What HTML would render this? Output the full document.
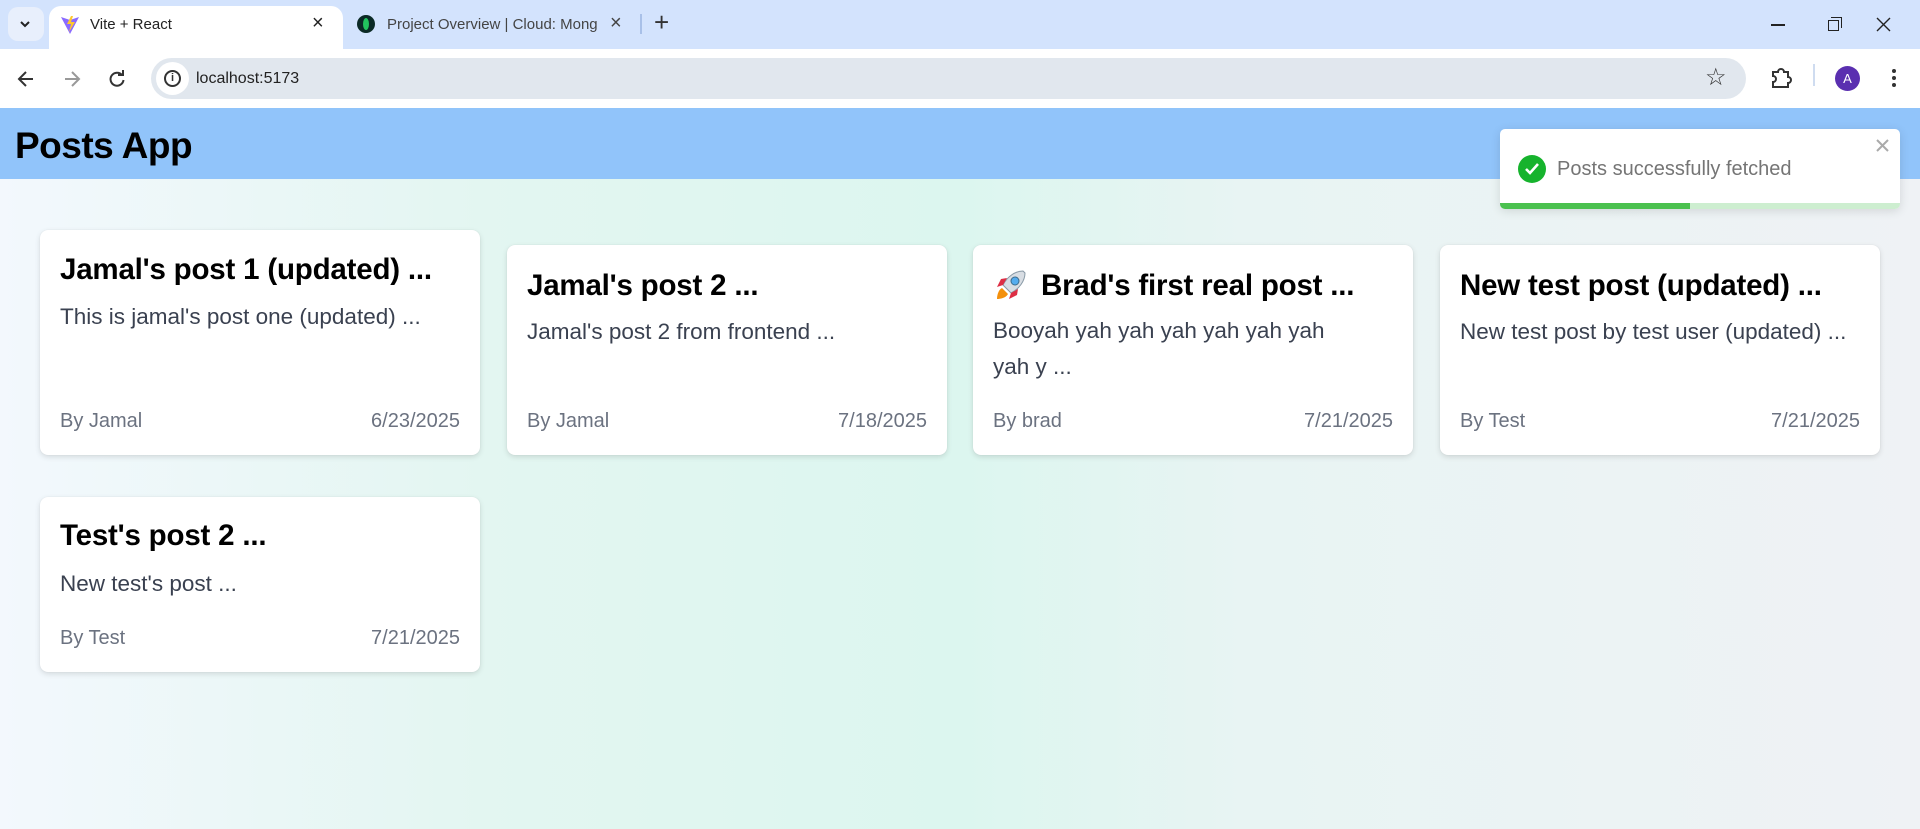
<!DOCTYPE html>
<html><head><meta charset="utf-8"><style>
*{margin:0;padding:0;box-sizing:border-box}
body{width:1920px;height:829px;overflow:hidden;font-family:"Liberation Sans",sans-serif;position:relative;background:#fff}
.abs{position:absolute}
#tabs{left:0;top:0;width:1920px;height:49px;background:#d3e3fd}
#tool{left:0;top:49px;width:1920px;height:59px;background:#fff}
#page{left:0;top:108px;width:1920px;height:721px;background:linear-gradient(90deg,#f3f8fd 0%,#e3f6f1 25%,#dcf6ef 50%,#e8f4f3 65%,#eff2f5 100%)}
#hdr{left:0;top:108px;width:1920px;height:71px;background:#91c4fa}
.card{position:absolute;background:#fff;border-radius:8px;box-shadow:0 2px 6px rgba(0,0,0,.12),0 0 1px rgba(0,0,0,.1)}
.t{position:absolute;left:20px;font-size:29.5px;line-height:1;font-weight:bold;color:#000;letter-spacing:-0.2px;white-space:nowrap}
.b{position:absolute;left:20px;font-size:22.5px;line-height:1;color:#3a4150;letter-spacing:0}
.f{position:absolute;left:20px;right:20px;font-size:20px;line-height:1;color:#6b7280;display:flex;justify-content:space-between}
</style></head><body>
<div id="page" class="abs"></div>
<div id="tabs" class="abs">
 <div class="abs" style="left:8px;top:7px;width:36px;height:34px;background:#e8effc;border-radius:10px"></div>
 <svg class="abs" style="left:19px;top:19px" width="12" height="10"><path d="M2 3l4 4 4-4" stroke="#222" stroke-width="2" fill="none"/></svg>
 <div class="abs" style="left:49px;top:6px;width:294px;height:44px;background:#fff;border-radius:12px 12px 0 0"></div>
 <svg class="abs" style="left:60px;top:15px" width="20" height="20"><path d="M1 2L10 19L19 2L10 5Z" fill="#8a6bff"/><path d="M11 1L7 9h4l-2 8 6-10h-4l2-6z" fill="#ffc82e"/></svg>
 <div class="abs" style="left:90px;top:16px;font-size:15px;color:#222">Vite + React</div>
 <div class="abs" style="left:312px;top:12px;font-size:20px;color:#222">×</div>
 <div class="abs" style="left:357px;top:15px;width:18px;height:18px;border-radius:50%;background:#0b2a26"></div>
 <div class="abs" style="left:363px;top:18px;width:6px;height:12px;border-radius:50%;background:#22c55e"></div>
 <div class="abs" style="left:387px;top:16px;font-size:15px;color:#444;width:210px;overflow:hidden;white-space:nowrap">Project Overview | Cloud: Mong</div>
 <div class="abs" style="left:610px;top:12px;font-size:20px;color:#444">×</div>
 <div class="abs" style="left:640px;top:14px;width:2px;height:20px;background:#a8c0e8"></div>
 <div class="abs" style="left:654px;top:7px;font-size:26px;color:#333">+</div>
 <div class="abs" style="left:1771px;top:24px;width:14px;height:1.5px;background:#222"></div>
 <div class="abs" style="left:1828px;top:20px;width:11px;height:11px;border:1.5px solid #222"></div>
 <div class="abs" style="left:1831px;top:17px;width:11px;height:11px;border-top:1.5px solid #222;border-right:1.5px solid #222"></div>
 <svg class="abs" style="left:1876px;top:17px" width="15" height="15"><path d="M1 1L14 14M14 1L1 14" stroke="#222" stroke-width="1.4"/></svg>
</div>
<div id="tool" class="abs">
 <svg class="abs" style="left:16px;top:20px" width="20" height="20"><path d="M17 10H4M10 3L3 10l7 7" stroke="#333" stroke-width="2" fill="none"/></svg>
 <svg class="abs" style="left:62px;top:20px" width="20" height="20"><path d="M3 10h13M10 3l7 7-7 7" stroke="#999" stroke-width="2" fill="none"/></svg>
 <svg class="abs" style="left:107px;top:20px" width="20" height="20"><path d="M15 6A6.5 6.5 0 1 0 16.5 11" stroke="#333" stroke-width="2" fill="none"/><path d="M11 6h5V1" stroke="#333" stroke-width="2" fill="none"/></svg>
 <div class="abs" style="left:151px;top:9px;width:1595px;height:41px;background:#e1e7ee;border-radius:21px"></div>
 <div class="abs" style="left:156px;top:13px;width:33px;height:33px;background:#fff;border-radius:50%"></div>
 <div class="abs" style="left:164px;top:21px;width:17px;height:17px;border:2px solid #333;border-radius:50%;font-size:11px;font-weight:bold;text-align:center;line-height:13px;color:#333">i</div>
 <div class="abs" style="left:196px;top:21px;font-size:16px;color:#222">localhost:5173</div>
 <div class="abs" style="left:1705px;top:14px;font-size:24px;color:#333">☆</div>
 <svg class="abs" style="left:1770px;top:18px" width="22" height="22"><path d="M3 5h5a3 3 0 0 1 6 0h4v5a3 3 0 0 1 0 6v4H3v-5a3 3 0 0 0 0-6z" stroke="#333" stroke-width="2" fill="none"/></svg>
 <div class="abs" style="left:1813px;top:15px;width:2px;height:22px;background:#cfdcf0"></div>
 <div class="abs" style="left:1835px;top:17px;width:25px;height:25px;border-radius:50%;background:#5a2fb0;color:#fff;font-size:13px;text-align:center;line-height:25px">A</div>
 <div class="abs" style="left:1892px;top:20px;width:4px;height:4px;border-radius:50%;background:#333;box-shadow:0 7px 0 #333,0 14px 0 #333"></div>
</div>
<div id="hdr" class="abs"><div class="abs" style="left:15px;top:17px;font-size:37px;font-weight:bold;color:#000;letter-spacing:-0.5px">Posts App</div></div>

<div class="card" style="left:40px;top:230px;width:440px;height:225px">
 <div class="t" style="top:25px">Jamal's post 1 (updated) ...</div>
 <div class="b" style="top:76px">This is jamal's post one (updated) ...</div>
 <div class="f" style="top:181px"><span>By Jamal</span><span>6/23/2025</span></div>
</div>
<div class="card" style="left:507px;top:245px;width:440px;height:210px">
 <div class="t" style="top:26px">Jamal's post 2 ...</div>
 <div class="b" style="top:76px">Jamal's post 2 from frontend ...</div>
 <div class="f" style="top:166px"><span>By Jamal</span><span>7/18/2025</span></div>
</div>
<div class="card" style="left:973px;top:245px;width:440px;height:210px">
 <svg style="position:absolute;left:20px;top:22px" width="36" height="36" viewBox="0 0 36 36"><path d="M30 4C22 4 14 10 10 18l8 8c8-4 14-12 14-20z" fill="#d8dde3" stroke="#8899a6"/><circle cx="22" cy="14" r="4" fill="#55acee" stroke="#3b6b8c"/><path d="M10 18l-6 2 4-8 6-1zM18 26l-2 6 8-4 1-6z" fill="#dd2e44"/><path d="M9 21c-4 2-5 8-5 11 3 0 9-1 11-5z" fill="#f4900c"/></svg>
 <div class="t" style="top:26px;left:68px">Brad's first real post ...</div>
 <div class="b" style="top:68px;line-height:36px;width:400px;white-space:nowrap">Booyah yah yah yah yah yah yah<br>yah y ...</div>
 <div class="f" style="top:166px"><span>By brad</span><span>7/21/2025</span></div>
</div>
<div class="card" style="left:1440px;top:245px;width:440px;height:210px">
 <div class="t" style="top:26px">New test post (updated) ...</div>
 <div class="b" style="top:76px">New test post by test user (updated) ...</div>
 <div class="f" style="top:166px"><span>By Test</span><span>7/21/2025</span></div>
</div>
<div class="card" style="left:40px;top:497px;width:440px;height:175px">
 <div class="t" style="top:24px">Test's post 2 ...</div>
 <div class="b" style="top:76px">New test's post ...</div>
 <div class="f" style="top:131px"><span>By Test</span><span>7/21/2025</span></div>
</div>

<div class="abs" style="left:1500px;top:129px;width:400px;height:80px;background:#fff;border-radius:5px;box-shadow:0 2px 10px rgba(0,0,0,.12);overflow:hidden">
 <div class="abs" style="left:18px;top:26px;width:28px;height:28px;border-radius:50%;background:#16b32d"></div>
 <svg class="abs" style="left:24px;top:33px" width="16" height="14"><path d="M2 7l4 4 8-9" stroke="#fff" stroke-width="2.6" fill="none"/></svg>
 <div class="abs" style="left:57px;top:29px;font-size:20px;color:#757575">Posts successfully fetched</div>
 <svg class="abs" style="left:376px;top:10px" width="13" height="13"><path d="M1 1L12 12M12 1L1 12" stroke="#aaa" stroke-width="2"/></svg>
 <div class="abs" style="left:0;bottom:0;width:400px;height:6px;background:#cdeed0"></div>
 <div class="abs" style="left:0;bottom:0;width:190px;height:6px;background:#4bc14f"></div>
</div>
</body></html>
